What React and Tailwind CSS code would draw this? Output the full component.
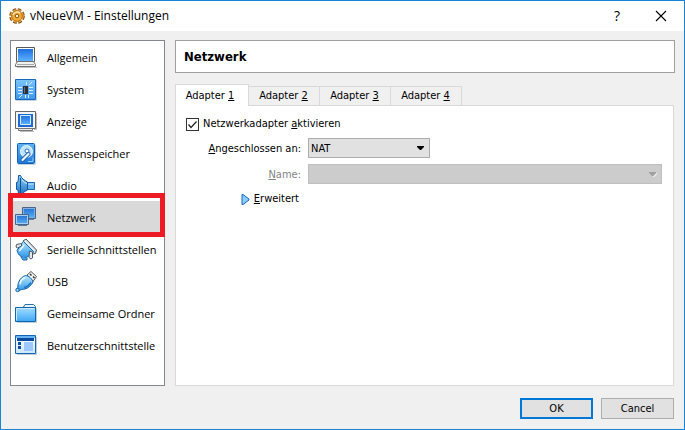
import React, { useState } from "react";

// ─── Icons ────────────────────────────────────────────────────────────────────

const BlueGradient = ({ id, from = "#1f6fe0", to = "#5cb2ff" }) => (
  <defs>
    <linearGradient id={id} x1="0" y1="0" x2="0" y2="1">
      <stop offset="0" stopColor={from} />
      <stop offset="1" stopColor={to} />
    </linearGradient>
  </defs>
);

const Icon = ({ children }) => (
  <svg width="22" height="22" viewBox="0 0 22 22" fill="none" className="shrink-0" aria-hidden="true">
    {children}
  </svg>
);

const GeneralIcon = () => (
  <Icon>
    <BlueGradient id="general" />
    <path d="M1.500.5h18v14h-18z" fill="#fff" stroke="#5a5a5a" />
    <path d="M3 2h15v12H3z" fill="url(#general)" />
    <path d="M2.500 14.500h16l2 3v2H.5v-2z" fill="#f1f1f1" stroke="#707070" />
    <path d="M2 17.500h17" stroke="#a8a8a8" />
    <path d="M2 20.500h20" stroke="#c4c4c4" />
  </Icon>
);

const SystemIcon = () => (
  <Icon>
    <BlueGradient id="system" from="#7cc4ff" to="#3f97ea" />
    <path d="M.5.5h20v20H.5z" fill="url(#system)" stroke="#1667bd" />
    <path d="M8 7h5v8H8z" fill="#2b3036" />
    <path d="M9.500 8v6" stroke="#6b7076" />
    <path d="M3 8.500h4M3 11.500h4M3 14.500h4M14 8.500h4M14 11.500h4M14 14.500h4M11.500 3v3M14 6l3-3M10.500 16v3M13.500 16v3M4 19l3-3" stroke="#d8efff" />
    <path d="M1 21.500h20.500V1" stroke="#c6d4e2" />
  </Icon>
);

const DisplayIcon = () => (
  <Icon>
    <BlueGradient id="display" />
    <path d="M.5.5h20v17H.5z" fill="#f4f4f4" stroke="#666" />
    <path d="M3 3h15v13H3z" fill="#1c69d2" />
    <path d="M5.500 4.500h10v9h-10z" fill="url(#display)" stroke="#d5ecff" />
    <path d="M3.500 17.500h14v2h-14z" fill="#e8e8e8" stroke="#777" />
    <path d="M21.500 2v16.500H19M5 20.500h14" stroke="#bbb" />
  </Icon>
);

const StorageIcon = () => (
  <Icon>
    <BlueGradient id="storage" from="#5fb4fa" to="#1f78d6" />
    <rect x="2.500" y=".5" width="17" height="20" rx="1" fill="url(#storage)" stroke="#1160b4" />
    <circle cx="11.500" cy="8.500" r="6" fill="#bfe4ff" stroke="#eef8ff" />
    <circle cx="12" cy="8" r="2" fill="#fff" stroke="#2673bd" />
    <path d="m13.500 11-6 6" stroke="#1d5fa8" strokeWidth="4" strokeLinecap="round" />
    <path d="m13.500 11-6 6" stroke="#eff9ff" strokeWidth="2.200" strokeLinecap="round" />
    <path d="M13 18.500h5v-4" stroke="#8fd0ff" />
    <path d="M3 21.500h17.500V2" stroke="#c6d4e2" />
  </Icon>
);

const AudioIcon = () => (
  <Icon>
    <BlueGradient id="audio" from="#8ed2fb" to="#1467b8" />
    <path d="M11.500 7.500h8v7h-8z" fill="#62b0ee" stroke="#1a64b3" />
    <path d="M13 9h6" stroke="#cbeaff" />
    <path
      d="M1.500 7.500h1c1-2 1-5 1-7h2c1 3 4 5 7 6.500v8c-3 1.500-6 3.500-7 6.500h-2c0-2 0-5-1-7h-1z"
      fill="url(#audio)"
      stroke="#1159a8"
    />
    <path d="M5.500 3v15" stroke="#0f4f9b" />
    <path d="M7 5c1 1.500 3 3 5 3.500" stroke="#d2efff" />
  </Icon>
);

const NetworkIcon = () => (
  <Icon>
    <BlueGradient id="network" from="#2877d9" to="#55a9f2" />
    <path d="M7.500.5h13v11h-13z" fill="#82b1db" stroke="#46678a" />
    <path d="M9 2h10v8H9z" fill="url(#network)" />
    <path d="M10 12.500h9" stroke="#6b8197" />
    <path d="M.5 7.500h13v10H.5z" fill="#a8cdec" stroke="#46678a" />
    <path d="M2 9h10v7H2z" fill="url(#network)" />
    <path d="M3 18.500h9" stroke="#60788f" />
  </Icon>
);

const SerialIcon = () => (
  <Icon>
    <BlueGradient id="serial" from="#b4e5ff" to="#2f98ea" />
    <path d="m8 2 3-2 10.500 11-1 3.500-3 .5z" fill="#d7dde1" stroke="#4a555e" />
    <path d="M8.500 2.500c-2 1-1.500 3-3 4L2 11.500c1 2.500 1.500 4.500 4 6 2 1.500 3 1 5.500 1l4.500-3c1-1.500 2-1 2.500-3z" fill="url(#serial)" stroke="#1463ae" />
    <path d="M9 6c-1 2-3 3-4.500 6" stroke="#e4f7ff" strokeWidth="1.500" />
    <path d="m6.500 4.500-5 1-.5 2.500 1.500 1 4-2z" fill="#e3e8eb" stroke="#4b5c68" />
    <path d="m14.500 12 3 1v6l-1.500 1-2-1.500z" fill="#e3e8eb" stroke="#4b5c68" />
    <path d="m6 18 2 3h4v-2" fill="#4aa7e8" stroke="#1c69b0" />
    <path d="m10 2 9.500 10" stroke="#fff" />
  </Icon>
);

const UsbIcon = () => (
  <Icon>
    <BlueGradient id="usb" from="#b9e8ff" to="#2f98e6" />
    <path d="m12 4 4-3.500 5.500 5-3.500 5z" fill="#f4f4f4" stroke="#555" />
    <path d="m15 3 1.500 1.500M18 5.500l1.500 1.500" stroke="#333" strokeWidth="1.500" />
    <path d="M10.500 4.500c3 0 7 3.500 7.500 6.500-1.500 3-4.500 6-8 7-2.500.5-4 0-6 2l-2-2c1.500-2 .5-4 1.500-6.500 1.500-4 4-6 7-7z" fill="url(#usb)" stroke="#1260aa" />
    <path d="M10 6.500c-3 1.500-5 4-5 7" stroke="#effbff" strokeWidth="1.500" />
    <path d="M16 11.500c-2 3-4 4.500-7 5" stroke="#1b74c5" strokeWidth="1.500" />
    <circle cx="2.500" cy="19" r="1.700" fill="#9ddafc" stroke="#1260aa" />
  </Icon>
);

const FolderIcon = () => (
  <Icon>
    <BlueGradient id="folder" from="#a3ddff" to="#3fa7f5" />
    <path d="m8.500 4 1.500-2.500h8.500l2 2V7h-12z" fill="#e9f6ff" stroke="#2470b0" />
    <path d="M.5 4.500h20v14H.5z" fill="url(#folder)" stroke="#1565ad" />
    <path d="M1.500 17.500v-12h18" stroke="#c9ecff" />
    <path d="M2 19.500h19.500V5" stroke="#becddd" />
  </Icon>
);

const InterfaceIcon = () => (
  <Icon>
    <BlueGradient id="interface" from="#fff" to="#cde6ff" />
    <path d="M.5.5h20v18H.5z" fill="url(#interface)" stroke="#1565b7" />
    <path d="M1 1h19v2H1z" fill="#66b2f2" />
    <path d="M2 3h17v3H2z" fill="#0b48a0" />
    <path d="M3 7h3v3H3zM3 11h3v3H3z" fill="#0d4ca6" />
    <path d="M9 7h9v9H9z" fill="#9bc8ff" />
    <path d="M2 19.500h19.500V2" stroke="#bccad8" />
  </Icon>
);

const GearIcon = () => (
  <svg width="16" height="16" viewBox="0 0 16 16" fill="none" aria-hidden="true">
    <circle cx="8" cy="8" r="6.300" stroke="#7a4710" strokeWidth="3" strokeDasharray="3.400 1.550" />
    <circle cx="8" cy="8" r="5.800" stroke="#f0a93a" strokeWidth="2" strokeDasharray="3.100 1.460" />
    <circle cx="8" cy="8" r="5.300" fill="#f3ab36" stroke="#a3600f" strokeWidth=".8" />
    <path d="M4 7c1-3 5-4 7-2" stroke="#ffe9b0" strokeWidth="1.500" />
    <circle cx="8" cy="8" r="1.800" fill="#fff3d9" stroke="#8a4f0b" />
  </svg>
);

// ─── Data ─────────────────────────────────────────────────────────────────────

const CATEGORIES = [
  { id: "general", label: "Allgemein", icon: GeneralIcon },
  { id: "system", label: "System", icon: SystemIcon },
  { id: "display", label: "Anzeige", icon: DisplayIcon },
  { id: "storage", label: "Massenspeicher", icon: StorageIcon },
  { id: "audio", label: "Audio", icon: AudioIcon },
  { id: "network", label: "Netzwerk", icon: NetworkIcon, marked: true },
  { id: "serial", label: "Serielle Schnittstellen", icon: SerialIcon },
  { id: "usb", label: "USB", icon: UsbIcon },
  { id: "folders", label: "Gemeinsame Ordner", icon: FolderIcon },
  { id: "interface", label: "Benutzerschnittstelle", icon: InterfaceIcon },
];

const ADAPTERS = [1, 2, 3, 4];

// ─── Parts ────────────────────────────────────────────────────────────────────

const TitleBar = () => (
  <header className="flex h-[30px] shrink-0 items-center bg-white pl-2 pr-[11px] font-['Open_Sans','Noto_Sans',sans-serif]">
    <GearIcon />
    <h1 className="ml-[5px] flex-1 text-[12px] leading-4">vNeueVM - Einstellungen</h1>
    <button type="button" aria-label="Hilfe" className="w-6 text-[14px] leading-4">
      ?
    </button>
    <button type="button" aria-label="Schließen" className="ml-5 flex w-6 justify-center">
      <svg width="12" height="12" viewBox="0 0 12 12" fill="none">
        <path d="m1 1 10 10M11 1 1 11" stroke="#000" strokeWidth="1.100" />
      </svg>
    </button>
  </header>
);

const Sidebar = ({ active, onSelect }) => (
  <nav className="w-[155px] shrink-0 border border-[#828790] bg-white font-['Open_Sans','Noto_Sans',sans-serif] text-[11px] leading-4">
    {CATEGORIES.map(({ id, label, icon: CategoryIcon, marked }) => (
      <button
        key={id}
        type="button"
        onClick={() => onSelect(id)}
        className={`relative flex h-8 w-full items-center gap-[10px] whitespace-nowrap pl-1 pt-px text-left ${
          active === id ? "bg-[#d9d9d9]" : ""
        }`}
      >
        <CategoryIcon />
        {label}
        {marked && (
          <span className="pointer-events-none absolute -bottom-1 -left-[3px] -right-px -top-2 z-10 border-[5px] border-[#ed1c24]" />
        )}
      </button>
    ))}
  </nav>
);

const AdapterTabs = ({ active, onSelect }) => (
  <div role="tablist" className="flex h-[21px] items-end">
    {ADAPTERS.map((n) => (
      <button
        key={n}
        type="button"
        role="tab"
        aria-selected={active === n}
        onClick={() => onSelect(n)}
        className={
          active === n
            ? "relative z-10 -mb-px h-[22px] w-[74px] border border-b-0 border-[#d9d9d9] bg-white pr-1"
            : "h-[19px] w-[71px] border border-l-0 border-b-0 border-[#d9d9d9] bg-[#f0f0f0] pr-px"
        }
      >
        Adapter <u>{n}</u>
      </button>
    ))}
  </div>
);

const Arrow = ({ disabled }) => (
  <svg
    width="9"
    height="5"
    viewBox="0 0 9 5"
    className="pointer-events-none absolute right-[5px] top-2"
    aria-hidden="true"
  >
    {disabled && <path d="m5 5 4-4v1L6 5z" fill="#fff" />}
    <path d="M1 0h7v1L5 4H4L1 1z" fill={disabled ? "#a0a0a0" : "#000"} />
  </svg>
);

const AdapterPanel = () => {
  const [enabled, setEnabled] = useState(true);
  const [attachment, setAttachment] = useState("NAT");

  return (
    <div role="tabpanel" className="mr-px flex-1 border border-[#d9d9d9] bg-white pl-[10px] pr-[11px] pt-[11px]">
      <label className="flex w-fit items-center gap-1">
        <span className="relative flex size-[13px]">
          <input
            type="checkbox"
            checked={enabled}
            onChange={(e) => setEnabled(e.target.checked)}
            className="size-[13px] appearance-none border border-[#333] bg-white"
          />
          {enabled && (
            <svg width="13" height="13" viewBox="0 0 13 13" fill="none" className="pointer-events-none absolute inset-0">
              <path d="m2.500 6.500 2.500 3 5.500-6" stroke="#222" strokeWidth="1.200" />
            </svg>
          )}
        </span>
        <span>
          Netzwerkadapter <u>a</u>ktivieren
        </span>
      </label>

      <div className="mt-[7px] grid grid-cols-[115px_1fr] items-center gap-x-[7px] gap-y-[6px]">
        <label htmlFor="attachment" className="pt-px text-right">
          <u>A</u>ngeschlossen an:
        </label>
        <div className="relative w-[122px]">
          <select
            id="attachment"
            value={attachment}
            onChange={(e) => setAttachment(e.target.value)}
            className="block h-5 w-full appearance-none border border-[#adadad] bg-[#e1e1e1] pl-[2px] pt-px"
          >
            <option>NAT</option>
            <option>Netzwerkbrücke</option>
          </select>
          <Arrow />
        </div>

        <label htmlFor="name" className="pt-px text-right text-[#838383]">
          <u>N</u>ame:
        </label>
        <div className="relative">
          <select
            id="name"
            disabled
            className="block h-5 w-full appearance-none border border-[#bfbfbf] bg-[#ccc] pl-[2px] opacity-100"
          />
          <Arrow disabled />
        </div>

        <button type="button" className="flex items-center gap-1 justify-self-end whitespace-nowrap pr-[2px] pt-[2px]">
          <svg width="9" height="11" viewBox="0 0 9 11" aria-hidden="true">
            <path d="M1 .5h1L8 5v1l-6 4.500H1z" fill="#8accff" stroke="#1668b8" />
          </svg>
          <span>
            <u>E</u>rweitert
          </span>
        </button>
      </div>
    </div>
  );
};

/**
 * Settings window of a virtual machine
 */
const App = () => {
  const [category, setCategory] = useState("network");
  const [adapter, setAdapter] = useState(1);

  const title = CATEGORIES.find((c) => c.id === category).label;

  return (
    <div className="flex min-h-screen flex-col border border-[#1883d7] bg-[#f0f0f0] font-['DejaVu_Sans_Condensed','DejaVu_Sans',sans-serif] text-[11px] leading-[14px] text-black">
      <TitleBar />

      <main className="flex flex-1 gap-[10px] px-[9px] pt-[9px]">
        <Sidebar active={category} onSelect={setCategory} />
        <section className="flex min-w-0 flex-1 flex-col">
          <h2 className="mb-[11px] flex h-[33px] items-center border border-[#a0a0a0] bg-white px-2 text-[13px] font-bold">
            {title}
          </h2>
          <AdapterTabs active={adapter} onSelect={setAdapter} />
          <AdapterPanel key={adapter} />
        </section>
      </main>

      <footer className="flex justify-end gap-2 px-[10px] pb-[10px] pt-3">
        <button type="button" className="h-[21px] w-[73px] border-2 border-[#0078d7] bg-[#e1e1e1]">
          OK
        </button>
        <button type="button" className="h-[21px] w-[73px] border border-[#adadad] bg-[#e1e1e1]">
          Cancel
        </button>
      </footer>
    </div>
  );
};

export default App;
